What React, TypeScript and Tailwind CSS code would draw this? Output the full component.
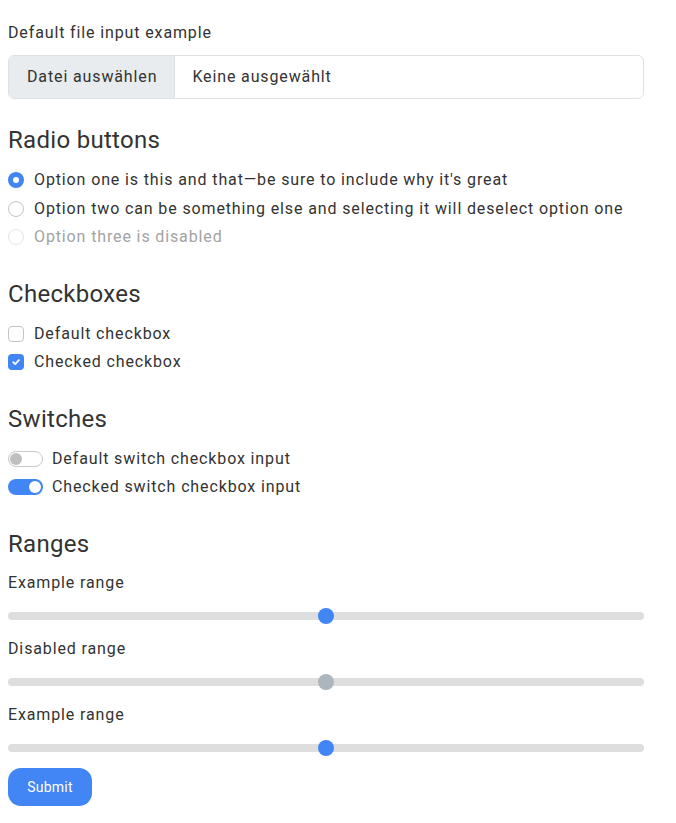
import React from "react";

function Radio({ checked, disabled, label }: { checked?: boolean; disabled?: boolean; label: string }) {
  return (
    <div className="flex items-center h-[28.5px]">
      {checked ? (
        <span className="w-4 h-4 rounded-full bg-[#4285f4] flex items-center justify-center shrink-0">
          <span className="w-[6px] h-[6px] rounded-full bg-white" />
        </span>
      ) : (
        <span
          className={
            "w-4 h-4 rounded-full border shrink-0 " +
            (disabled ? "border-[#e3e3e3]" : "border-[#c4c4c4]")
          }
        />
      )}
      <span className={"ml-[10px] " + (disabled ? "text-[#a3a3a3]" : "text-[#333]")}>{label}</span>
    </div>
  );
}

function Checkbox({ checked, label }: { checked?: boolean; label: string }) {
  return (
    <div className="flex items-center h-[28.5px]">
      {checked ? (
        <span className="w-4 h-4 rounded-[4px] bg-[#4285f4] flex items-center justify-center shrink-0">
          <svg width="10" height="10" viewBox="0 0 10 10" fill="none">
            <path d="M2.2 5.2 L4.2 7.1 L7.9 3.1" stroke="white" strokeWidth="1.8" strokeLinecap="round" strokeLinejoin="round" />
          </svg>
        </span>
      ) : (
        <span className="w-4 h-4 rounded-[4px] border border-[#c4c4c4] shrink-0" />
      )}
      <span className="ml-[10px] text-[#333]">{label}</span>
    </div>
  );
}

function Switch({ checked, label }: { checked?: boolean; label: string }) {
  return (
    <div className="flex items-center h-[28.5px]">
      {checked ? (
        <span className="w-[35px] h-4 rounded-full bg-[#4285f4] flex items-center justify-end pr-[2px] shrink-0">
          <span className="w-3 h-3 rounded-full bg-white" />
        </span>
      ) : (
        <span className="w-[35px] h-4 rounded-full border border-[#c8c8c8] flex items-center pl-[1px] shrink-0">
          <span className="w-3 h-3 rounded-full bg-[#bfbfbf]" />
        </span>
      )}
      <span className="ml-[9px] text-[#333]">{label}</span>
    </div>
  );
}

function Range({ disabled }: { disabled?: boolean }) {
  return (
    <div className="relative h-4 flex items-center">
      <div className="w-full h-2 rounded-full bg-[#dedede]" />
      <span
        className={
          "absolute left-1/2 top-0 -translate-x-1/2 w-4 h-4 rounded-full " +
          (disabled ? "bg-[#adb5bd]" : "bg-[#4285f4]")
        }
      />
    </div>
  );
}

export default function App() {
  return (
    <div
      className="bg-white min-h-[823px] text-[16px] text-[#333] leading-6 tracking-[0.87px]"
      style={{ fontFamily: "Roboto, 'Liberation Sans', sans-serif" }}
    >
      <div className="ml-2 w-[636px] pt-[21px]">
        <div className="h-6">Default file input example</div>
        <div className="mt-[10px] h-[44px] border border-[#dee2e6] rounded-[6px] flex overflow-hidden">
          <div className="bg-[#e9ecef] border-r border-[#dee2e6] pl-[18px] pr-[17px] flex items-center">Datei auswählen</div>
          <div className="px-[17px] flex items-center">Keine ausgewählt</div>
        </div>

        <div className="mt-[27px] h-[28px] leading-[28px] text-[24px] tracking-[0.3px]">Radio buttons</div>
        <div className="mt-[12px]">
          <Radio checked label="Option one is this and that—be sure to include why it's great" />
          <Radio label="Option two can be something else and selecting it will deselect option one" />
          <Radio disabled label="Option three is disabled" />
        </div>

        <div className="mt-[28px] h-[28px] leading-[28px] text-[24px] tracking-[0.3px]">Checkboxes</div>
        <div className="mt-[12px]">
          <Checkbox label="Default checkbox" />
          <Checkbox checked label="Checked checkbox" />
        </div>

        <div className="mt-[28px] h-[28px] leading-[28px] text-[24px] tracking-[0.3px]">Switches</div>
        <div className="mt-[12px]">
          <Switch label="Default switch checkbox input" />
          <Switch checked label="Checked switch checkbox input" />
        </div>

        <div className="mt-[28px] h-[28px] leading-[28px] text-[24px] tracking-[0.3px]">Ranges</div>
        <div className="mt-[13px] h-6">Example range</div>
        <div className="mt-[13px]"><Range /></div>
        <div className="mt-[13px] h-6">Disabled range</div>
        <div className="mt-[13px]"><Range disabled /></div>
        <div className="mt-[13px] h-6">Example range</div>
        <div className="mt-[13px]"><Range /></div>

        <button className="mt-[12px] h-[38px] w-[84px] rounded-[13px] bg-[#4285f4] text-white text-[14px] tracking-[0.2px] flex items-center justify-center">
          Submit
        </button>
      </div>
    </div>
  );
}
